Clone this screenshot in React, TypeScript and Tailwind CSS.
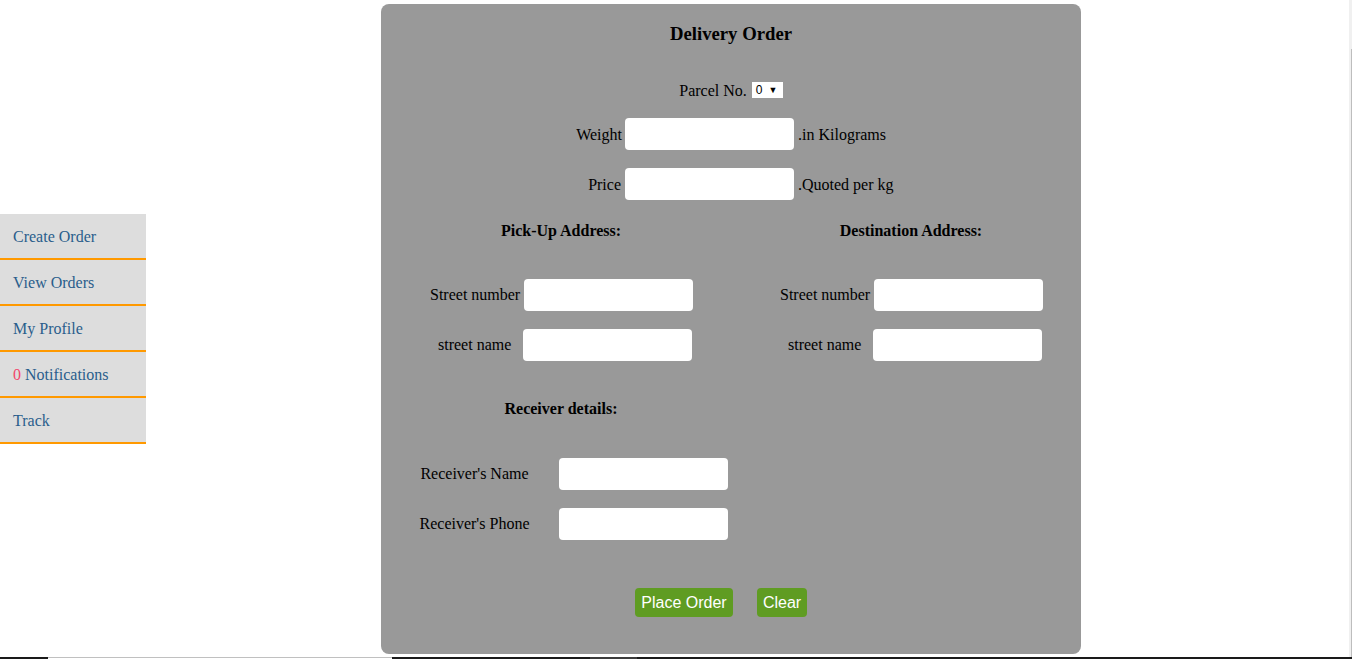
import { useState } from 'react'

const menu = ['Create Order', 'View Orders', 'My Profile', 'Notifications', 'Track']

function Field({ className = '' }: { className?: string }) {
  return <input type="text" className={`h-[32px] w-[169px] rounded-[4px] border-0 bg-white px-2 outline-none ${className}`} />
}

function AddressColumn({ title }: { title: string }) {
  return (
    <div className="w-[350px] shrink-0">
      <div className="h-[20px] text-center font-bold leading-[20px]">{title}</div>
      <div className="mt-[38px] flex h-[32px] items-center pl-[44px]">
        <span>Street number</span>
        <Field className="ml-[4px]" />
      </div>
      <div className="mt-[18px] flex h-[32px] items-center pl-[52px]">
        <span>street name</span>
        <Field className="ml-[12px]" />
      </div>
    </div>
  )
}

export default function App() {
  const [parcel, setParcel] = useState('0')

  return (
    <div className="relative h-[659px] overflow-hidden bg-white font-['Liberation_Serif',serif] text-[16px] text-black">
      <div className="flex">
        <nav className="mt-[214px] w-[146px] shrink-0">
          {menu.map((item) => (
            <div
              key={item}
              className="flex h-[46px] items-center border-b-2 border-[#ff9900] bg-[#dddddd] pl-[13px] pt-[1px] text-[#2a5d8c]"
            >
              {item === 'Notifications' && <span className="mr-[4px] text-[#f2476a]">0</span>}
              {item}
            </div>
          ))}
        </nav>

        <main className="ml-[235px] mt-[4px] h-[650px] w-[700px] shrink-0 rounded-[8px] bg-[#999999] pt-[19px]">
          <h3 className="h-[22px] text-center text-[18.72px] font-bold leading-[22px]">Delivery Order</h3>

          <div className="mt-[35px] flex h-[20px] items-center justify-center">
            <span className="pt-[1px]">Parcel No.</span>
            <div
              className="ml-[5px] flex h-[16px] w-[31px] items-center bg-white pl-[4px] font-['Liberation_Sans',sans-serif] text-[12px] leading-none"
              onClick={() => setParcel(parcel)}
            >
              <span>{parcel}</span>
              <span className="ml-[6px] text-[9px]">▼</span>
            </div>
          </div>

          <div className="mt-[18px] flex h-[32px] items-center">
            <span className="w-[241px] pt-[1px] text-right">Weight</span>
            <Field className="ml-[3px]" />
            <span className="ml-[4px] pt-[1px]">.in Kilograms</span>
          </div>

          <div className="mt-[18px] flex h-[32px] items-center">
            <span className="w-[240px] pt-[1px] text-right">Price</span>
            <Field className="ml-[4px]" />
            <span className="ml-[4px] pt-[1px]">.Quoted per kg</span>
          </div>

          <div className="mt-[21px] flex pl-[5px]">
            <AddressColumn title="Pick-Up Address:" />
            <AddressColumn title="Destination Address:" />
          </div>

          <div className="mt-[38px] ml-[5px] h-[20px] w-[350px] text-center font-bold leading-[20px]">
            Receiver details:
          </div>

          <div className="mt-[39px] flex h-[32px] items-center pl-[24px]">
            <span className="w-[139px] text-center">Receiver's Name</span>
            <Field className="ml-[15px]" />
          </div>
          <div className="mt-[18px] flex h-[32px] items-center pl-[24px]">
            <span className="w-[139px] text-center">Receiver's Phone</span>
            <Field className="ml-[15px]" />
          </div>

          <div className="mt-[48px] flex gap-[24px] pl-[254px] font-['Liberation_Sans',sans-serif]">
            <button className="h-[29px] w-[98px] rounded-[4px] bg-[#5f9c22] text-center text-[16px] leading-[29px] text-white">
              Place Order
            </button>
            <button className="h-[29px] w-[50px] rounded-[4px] bg-[#5f9c22] text-center text-[16px] leading-[29px] text-white">
              Clear
            </button>
          </div>
        </main>
      </div>

      {/* window chrome bits along the edges */}
      <div className="absolute right-0 top-0 h-full w-[3px] bg-[#f0f0f0]">
        <div className="absolute right-0 top-[49px] h-[610px] w-[1px] bg-[#bdbdbd]" />
      </div>
      <div className="absolute bottom-0 left-0 flex h-[2px] w-full">
        <div className="w-[48px] bg-[#1a1a1a]" />
        <div className="w-[344px] border-t border-[#c0c0c0] bg-white" />
        <div className="w-[198px] bg-[#1a1a1a]" />
        <div className="w-[47px] bg-[#3c3c3c]" />
        <div className="flex-1 bg-[#1a1a1a]" />
      </div>
    </div>
  )
}
